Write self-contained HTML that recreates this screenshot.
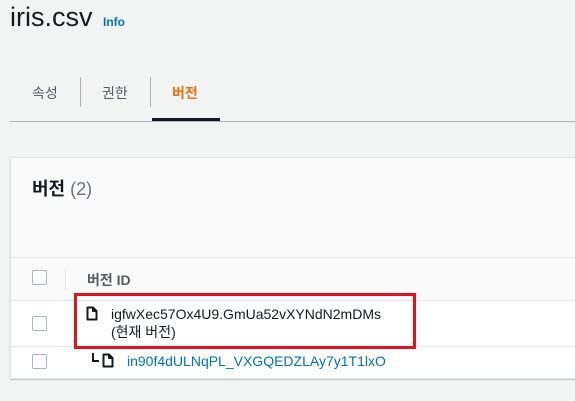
<!DOCTYPE html><html><head><style>
body{margin:0;width:575px;height:401px;background:#f2f3f3;font-family:"Liberation Sans","Noto Sans CJK KR",sans-serif;position:relative;overflow:hidden;color:#16191f}
.a{position:absolute;white-space:nowrap}
.cb{position:absolute;width:13px;height:13px;border:1px solid #aab7b8;border-radius:2px;background:#fff;left:32px}
</style></head><body>
<div class="a" style="left:10px;top:2px;font-size:27px;">iris.csv</div>
<div class="a" style="left:103px;top:15px;font-size:12px;font-weight:bold;color:#0073bb">Info</div>
<div class="a" style="left:32px;top:83px;font-size:14px;color:#545b64">속성</div>
<div class="a" style="left:80px;top:77px;width:1px;height:30px;background:#aab7b8"></div>
<div class="a" style="left:102px;top:83px;font-size:14px;color:#545b64">권한</div>
<div class="a" style="left:150px;top:77px;width:1px;height:30px;background:#aab7b8"></div>
<div class="a" style="left:172px;top:83px;font-size:14px;font-weight:bold;color:#ec7211">버전</div>
<div class="a" style="left:10px;top:121px;width:565px;height:1px;background:#aab7b8"></div>
<div class="a" style="left:152px;top:118px;width:68px;height:3px;background:#16191f"></div>
<div class="a" style="left:10px;top:157px;width:570px;height:220px;background:#fff;border:1px solid #dfe3e3;box-shadow:0 1px 1px rgba(0,0,0,.2)"></div>
<div class="a" style="left:11px;top:158px;width:570px;height:99px;background:#fafafa;border-bottom:1px solid #e4e7e7"></div>
<div class="a" style="left:32px;top:175px;font-size:18px;font-weight:bold">버전 <span style="font-weight:normal;color:#687078">(2)</span></div>
<div class="a" style="left:11px;top:258px;width:570px;height:42px;background:#fafafa"></div>
<div class="cb" style="top:270px"></div>
<div class="a" style="left:65px;top:268px;width:1px;height:22px;background:#e4e7e7"></div>
<div class="a" style="left:87px;top:270px;font-size:14px;font-weight:bold;color:#545b64">버전 ID</div>
<div class="a" style="left:11px;top:300px;width:570px;height:1px;background:#e4e7e7"></div>
<div class="cb" style="top:316px"></div>
<svg class="a" style="left:86px;top:306px" width="12" height="15" viewBox="0 0 12 15"><path d="M1.5 1.5h5.5l3.5 3.5v8.5h-9z M7 1.5v3.5h3.5" fill="none" stroke="#16191f" stroke-width="2" stroke-linejoin="round"/></svg>
<div class="a" style="left:111px;top:305px;font-size:14px;line-height:18px">igfwXec57Ox4U9.GmUa52vXYNdN2mDMs<br>(현재 버전)</div>
<div class="a" style="left:11px;top:346px;width:570px;height:1px;background:#e4e7e7"></div>
<div class="cb" style="top:354px"></div>
<div class="a" style="left:92px;top:353px;width:5px;height:7px;border-left:2px solid #16191f;border-bottom:2px solid #16191f"></div>
<svg class="a" style="left:102px;top:353px" width="12" height="15" viewBox="0 0 12 15"><path d="M1.5 1.5h5.5l3.5 3.5v8.5h-9z M7 1.5v3.5h3.5" fill="none" stroke="#16191f" stroke-width="2" stroke-linejoin="round"/></svg>
<div class="a" style="left:127px;top:353px;font-size:14px;color:#0073bb">in90f4dULNqPL_VXGQEDZLAy7y1T1lxO</div>
<div class="a" style="left:74px;top:293px;width:336px;height:50px;border:3px solid #e0141e"></div>
</body></html>
